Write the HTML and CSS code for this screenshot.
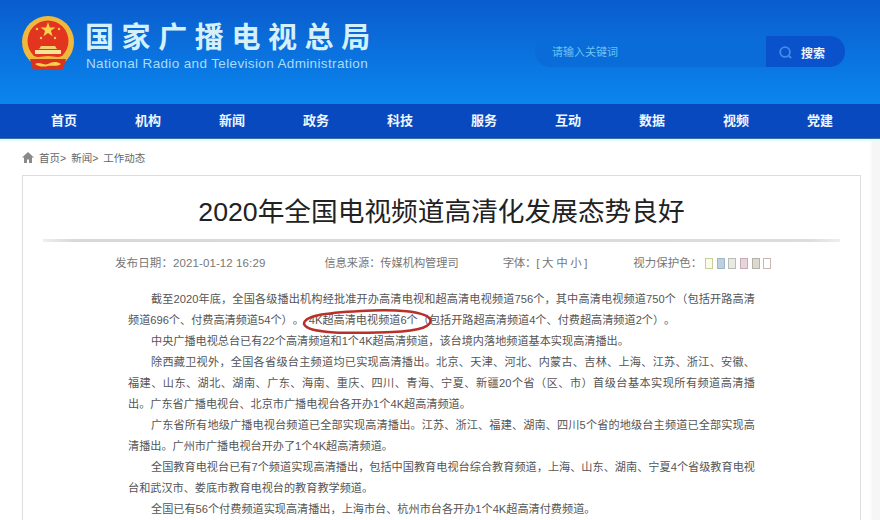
FILE: index.html
```html
<!DOCTYPE html>
<html lang="zh-CN">
<head>
    <meta charset="UTF-8">
    <title>2020年全国电视频道高清化发展态势良好</title>
    <link rel="stylesheet" href="styles.css">
</head>
<body>
    <header class="top">
        <div class="brand">
            <svg class="emblem" viewBox="0 0 54 56" width="54" height="56">
                <circle cx="26" cy="26" r="26" fill="#f0b93c"/>
                <circle cx="26" cy="25" r="20.5" fill="#e2351f"/>
                <polygon points="26,6 27.8,11.4 33.5,11.4 28.9,14.8 30.6,20.2 26,16.9 21.4,20.2 23.1,14.8 18.5,11.4 24.2,11.4" fill="#f7d24a"/>
                <circle cx="15" cy="13" r="1.2" fill="#f7d24a"/>
                <circle cx="37" cy="13" r="1.2" fill="#f7d24a"/>
                <circle cx="19" cy="22" r="1.2" fill="#f7d24a"/>
                <circle cx="33" cy="22" r="1.2" fill="#f7d24a"/>
                <path d="M19 30h14l2 3H17z" fill="#f6cf6a"/>
                <path d="M13 34h26v4H13z" fill="#fbe29a"/>
                <path d="M8 38c6 5 12 2 18 2s12 3 18-2v6H8z" fill="#f0b93c"/>
                <path d="M8 43h36l-3 11H11z" fill="#d9321f"/>
                <path d="M13 48c5-3 9 2 13 0s8-3 13 0c-4 3-9 1-13 2s-9 1-13-2z" fill="#f7d24a"/>
            </svg>
            <div>
                <div class="brand-cn">国家广播电视总局</div>
                <div class="brand-en">National Radio and Television Administration</div>
            </div>
        </div>
        <form class="search">
            <div class="search-input">请输入关键词</div>
            <div class="search-btn">
                <svg viewBox="0 0 16 16" width="15" height="15">
                    <circle cx="7.5" cy="7.5" r="5.2" fill="none" stroke="#3f8cec" stroke-width="2"/>
                    <path d="M11.5 11.5l2.5 2.5" stroke="#3f8cec" stroke-width="2"/>
                </svg>
                <span>搜索</span>
            </div>
        </form>
    </header>

    <nav class="nav">
        <a>首页</a>
        <a>机构</a>
        <a>新闻</a>
        <a>政务</a>
        <a>科技</a>
        <a>服务</a>
        <a>互动</a>
        <a>数据</a>
        <a>视频</a>
        <a>党建</a>
    </nav>

    <div class="crumbs">
        <svg viewBox="0 0 12 11" width="12" height="11">
            <path d="M6 0L0 5.5h2V11h3V7.5h2V11h3V5.5h2z" fill="#8a8a8a"/>
        </svg>
        <span>首页&gt;</span>
        <span>新闻&gt;</span>
        <span>工作动态</span>
    </div>

    <main class="card">
        <h1>2020年全国电视频道高清化发展态势良好</h1>
        <div class="rule"></div>
        <div class="meta">
            <span class="meta-date">发布日期：2021-01-12 16:29</span>
            <span class="meta-source">信息来源：传媒机构管理司</span>
            <span class="meta-font">字体：[ 大 中 小 ]</span>
            <span class="meta-eye">视力保护色：</span>
            <span class="swatches">
                <i class="sw1"></i><i class="sw2"></i><i class="sw3"></i><i class="sw4"></i><i class="sw5"></i><i class="sw6"></i>
            </span>
        </div>
        <article class="body">
            <p>截至2020年底，全国各级播出机构经批准开办高清电视和超高清电视频道756个，其中高清电视频道750个（包括开路高清频道696个、付费高清频道54个）。<span class="mark">4K超高清电视频道6个<svg class="ring" viewBox="0 0 132 26" width="132" height="26"><path d="M3 15C3 7 22 4 60 2c34-2 64 0 69 8 3 7-9 12-38 13-34 1-84 3-88-8z" fill="none" stroke="#b8302a" stroke-width="2.5"/></svg></span>（包括开路超高清频道4个、付费超高清频道2个）。</p>
            <p>中央广播电视总台已有22个高清频道和1个4K超高清频道，该台境内落地频道基本实现高清播出。</p>
            <p><span class="line">除西藏卫视外，全国各省级台主频道均已实现高清播出。北京、天津、河北、内蒙古、吉林、上海、江苏、浙江、安徽、</span><span class="line no-indent">福建、山东、湖北、湖南、广东、海南、重庆、四川、青海、宁夏、新疆20个省（区、市）首级台基本实现所有频道高清播</span>出。广东省广播电视台、北京市广播电视台各开办1个4K超高清频道。</p>
            <p>广东省所有地级广播电视台频道已全部实现高清播出。江苏、浙江、福建、湖南、四川5个省的地级台主频道已全部实现高清播出。广州市广播电视台开办了1个4K超高清频道。</p>
            <p>全国教育电视台已有7个频道实现高清播出，包括中国教育电视台综合教育频道，上海、山东、湖南、宁夏4个省级教育电视台和武汉市、娄底市教育电视台的教育教学频道。</p>
            <p>全国已有56个付费频道实现高清播出，上海市台、杭州市台各开办1个4K超高清付费频道。</p>
        </article>
    </main>
</body>
</html>
```

FILE: styles.css
```css
html, body {
    height: 520px;
    overflow: hidden;
}
body {
    margin: 0;
    background: linear-gradient(to right, #fff 870px, #f6f6f6 872px);
    font-family: "Liberation Sans", "Noto Sans CJK SC", sans-serif;
    color: #555;
}
.top {
    height: 104px;
    box-sizing: border-box;
    padding: 16px 35px 0 22px;
    display: flex;
    justify-content: space-between;
    background: linear-gradient(#0a5ccd, #0a86ee);
}
.brand {
    display: flex;
    gap: 9px;
}
.brand-cn {
    font-family: "Noto Sans CJK SC", sans-serif;
    font-size: 29px;
    line-height: 36px;
    margin-top: 1px;
    font-weight: 700;
    letter-spacing: 7.6px;
    color: #d4f0fb;
    white-space: nowrap;
}
.brand-en {
    margin: 2px 0 0 1px;
    font-size: 13.5px;
    line-height: 18px;
    letter-spacing: 0.36px;
    color: #a9dcf7;
    white-space: nowrap;
}
.search {
    display: flex;
    width: 310px;
    height: 31px;
    margin-top: 20px;
}
.search-input {
    flex: 1;
    padding-left: 17px;
    font-size: 11px;
    line-height: 33px;
    color: #6cc3f5;
    background: #0a6cd8;
    border-radius: 15px 0 0 15px;
}
.search-btn {
    width: 79px;
    box-sizing: border-box;
    padding: 1px 0 0 12px;
    display: flex;
    align-items: center;
    gap: 8px;
    font-size: 12px;
    font-weight: 700;
    color: #e8f4ff;
    background: #0a52cb;
    border-radius: 0 15px 15px 0;
}
.nav {
    height: 34px;
    padding: 0 18px 0 22px;
    display: flex;
    background: #0849c0;
    border-bottom: 1px solid #3a6f9a;
    box-shadow: 0 2px 0 #e2f8fb;
}
.nav a {
    flex: 1;
    font-size: 13px;
    font-weight: 700;
    line-height: 34px;
    text-align: center;
    color: #eef6ff;
}
.crumbs {
    height: 36px;
    padding-left: 22px;
    display: flex;
    align-items: center;
    gap: 5px;
    font-size: 10.5px;
    color: #666;
}
.card {
    margin: 0 19px 0 22px;
    height: 345px;
    box-sizing: border-box;
    background: #fff;
    border: 1px solid #ddd;
    border-bottom: 0;
}
h1 {
    margin: 14px 0 0;
    font-family: "Liberation Sans", "Noto Sans CJK SC", sans-serif;
    font-size: 26.7px;
    line-height: 44px;
    font-weight: 400;
    text-align: center;
    color: #222;
}
.rule {
    height: 3px;
    margin: 5px 20px 0;
    background: linear-gradient(to right, #eee, #d8d8d8 4%, #dcdcdc 96%, #eee);
}
.meta {
    margin-top: 12px;
    padding-left: 92px;
    display: flex;
    align-items: center;
    font-size: 11.5px;
    line-height: 18px;
    color: #777;
    white-space: nowrap;
}
.meta-date {
    letter-spacing: 0.1px;
}
.meta-source {
    margin-left: 59px;
    font-size: 11.2px;
}
.meta-font {
    margin-left: 44px;
    letter-spacing: -0.3px;
}
.meta-eye {
    margin-left: 46px;
}
.swatches {
    margin-left: 3px;
    display: flex;
    gap: 3.6px;
}
.swatches i {
    width: 6px;
    height: 9px;
    border: 1px solid #aaa;
}
.swatches .sw1 { border-color: #c6cf9a; background: #fafbea; }
.swatches .sw2 { border-color: #9db6c8; background: #bcd0de; }
.swatches .sw3 { border-color: #b8bcb4; background: #e8ebe2; }
.swatches .sw4 { border-color: #c9a9b4; background: #e6d6dc; }
.swatches .sw5 { border-color: #b3b1a8; background: #dcdad0; }
.swatches .sw6 { border-color: #c9b8b0; background: #fff; }
.body {
    margin: 17px 0 0 105px;
    width: 627px;
    font-size: 11.15px;
    line-height: 21px;
    color: #555;
    text-spacing-trim: space-all;
}
.body p {
    margin: 0;
    text-indent: 23px;
    text-align: justify;
}
.line {
    display: block;
    text-align-last: justify;
}
.no-indent {
    text-indent: 0;
}
.mark {
    position: relative;
    margin-left: 5px;
}
.ring {
    position: absolute;
    left: -8px;
    top: -5px;
}
```
